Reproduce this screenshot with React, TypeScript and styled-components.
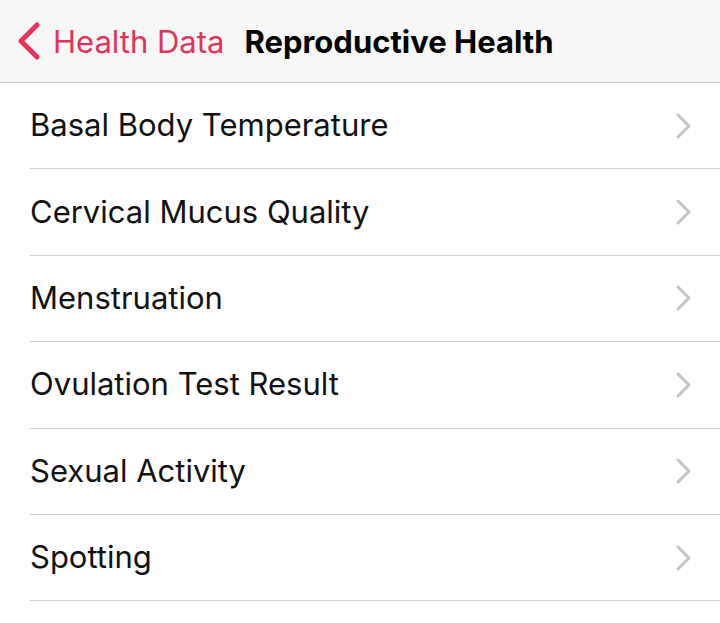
import styled, { createGlobalStyle } from "styled-components";

const GlobalStyle = createGlobalStyle`
  html, body {
    margin: 0;
    padding: 0;
    background: #ffffff;
  }
  body {
    font-family: Inter, "Liberation Sans", Arial, sans-serif;
    -webkit-font-smoothing: antialiased;
  }
`;

const Screen = styled.div`
  width: 720px;
  height: 623px;
  overflow: hidden;
  background: #ffffff;
`;

const NavBar = styled.header`
  height: 82px;
  display: flex;
  align-items: center;
  background: #f7f7f7;
  border-bottom: 1px solid #c4c4c4;
  padding: 0 0 0 16px;
  box-sizing: content-box;
`;

const BackButton = styled.a`
  display: flex;
  align-items: center;
  gap: 12px;
  color: #e2335c;
  font-size: 31px;
  text-decoration: none;
  margin-right: 20px;
`;

const Title = styled.h1`
  margin: 0;
  font-size: 31px;
  font-weight: 700;
  color: #000000;
`;

const List = styled.ul`
  list-style: none;
  margin: 0;
  padding: 0 0 0 30px;
`;

const Row = styled.li`
  height: 85.4px;
  display: flex;
  align-items: center;
  justify-content: space-between;
  border-bottom: 1px solid #cfcfd3;
  padding-right: 28px;
`;

const Label = styled.span`
  font-size: 31px;
  color: #111111;
  margin-top: -2px;
`;

const BackChevron = () => (
  <svg width="25" height="38" viewBox="0 0 25 38">
    <path
      d="M21 3 L5 19 L21 35"
      fill="none"
      stroke="#e8345d"
      strokeWidth="5"
      strokeLinecap="round"
      strokeLinejoin="round"
    />
  </svg>
);

const Disclosure = () => (
  <svg width="17" height="26" viewBox="0 0 17 26">
    <path
      d="M3 2 L14 13 L3 24"
      fill="none"
      stroke="#c4c4c9"
      strokeWidth="3"
      strokeLinecap="round"
      strokeLinejoin="round"
    />
  </svg>
);

const items = [
  "Basal Body Temperature",
  "Cervical Mucus Quality",
  "Menstruation",
  "Ovulation Test Result",
  "Sexual Activity",
  "Spotting",
];

const App = () => (
  <Screen>
    <GlobalStyle />
    <NavBar>
      <BackButton href="#">
        <BackChevron />
        Health Data
      </BackButton>
      <Title>Reproductive Health</Title>
    </NavBar>
    <List>
      {items.map((item) => (
        <Row key={item}>
          <Label>{item}</Label>
          <Disclosure />
        </Row>
      ))}
    </List>
  </Screen>
);

export default App;
